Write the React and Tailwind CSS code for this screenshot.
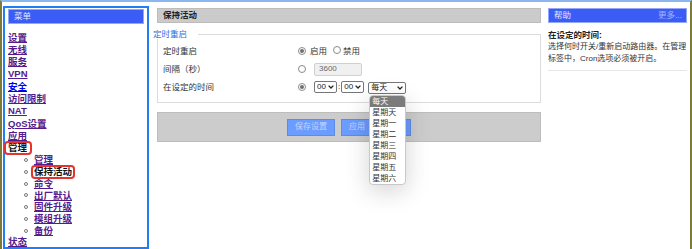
import React from 'react';

const menu = [
  { label: '设置' },
  { label: '无线' },
  { label: '服务' },
  { label: 'VPN' },
  { label: '安全', fresh: true },
  { label: '访问限制' },
  { label: 'NAT' },
  { label: 'QoS设置' },
  { label: '应用' },
];

const subMenu = ['管理', '保持活动', '命令', '出厂默认', '固件升级', '模组升级', '备份'];

const days = ['每天', '星期天', '星期一', '星期二', '星期三', '星期四', '星期五', '星期六'];

function Radio({ checked }) {
  return (
    <span className="inline-flex w-[8px] h-[8px] shrink-0 items-center justify-center rounded-full border border-[#8a8a8a] bg-white">
      {checked && <span className="w-[4px] h-[4px] rounded-full bg-[#6f6f6f]" />}
    </span>
  );
}

function Chevron() {
  return (
    <svg width="6" height="4" viewBox="0 0 6 4" className="shrink-0">
      <path d="M0.6 0.6 L3 3 L5.4 0.6" stroke="#222" strokeWidth="1.3" fill="none" />
    </svg>
  );
}

function Select({ value, width }) {
  return (
    <span className={`inline-flex h-[12px] items-center justify-between rounded-[2px] border border-[#767676] bg-white pl-[2px] pr-[2px] text-[8px] leading-[10px] text-[#222] ${width}`}>
      <span>{value}</span>
      <Chevron />
    </span>
  );
}

function PanelHeader({ title, more }) {
  return (
    <div className="flex h-[15px] items-center justify-between border border-[#93a8fb] bg-[#3b5df6] pl-[5px] pr-[4px] text-[8.5px] leading-[13px]">
      <span className="text-[#e4e8ff]">{title}</span>
      {more && <span className="text-[#a3b3ff]">{more}</span>}
    </div>
  );
}

export default function App() {
  return (
    <div className="flex h-[249px] items-start overflow-hidden border-t-2 border-l-2 border-r-2 border-t-[#8cb6ee] border-l-[#7b7a38] border-r-[#7b7a38] bg-white font-['Liberation_Sans','Noto_Sans_CJK_SC',sans-serif] text-[#333]">
      {/* left menu */}
      <div className="ml-[1px] mt-[4px] h-[243px] w-[146px] shrink-0 border-2 border-[#1f7ff3]">
        <div className="mx-[3px] mt-[1px]">
          <PanelHeader title="菜单" />
        </div>
        <div className="mt-[7.5px] pl-[3px] text-[9.5px] font-bold">
          {menu.map((m) => (
            <div key={m.label} className="leading-[12.3px]">
              <span className={`underline ${m.fresh ? 'text-[#0000ee]' : 'text-[#551a8b]'}`}>{m.label}</span>
            </div>
          ))}
          <div className="leading-[12.3px]">
            <span className="-ml-[3px] inline-block rounded-[3px] pl-[3px] pr-[4px] text-[#111] outline-2 outline-offset-[-1px] outline-[#e3342f]">管理</span>
          </div>
          {subMenu.map((s) => (
            <div key={s} className="flex items-center leading-[11.7px]">
              <span className="ml-[16px] mr-[6px] h-[4px] w-[4px] rounded-full border border-[#777]" />
              {s === '保持活动' ? (
                <span className="-ml-[2px] inline-block rounded-[3px] pl-[2px] pr-[2px] text-[#111] outline-2 outline-offset-[-1px] outline-[#e3342f]">{s}</span>
              ) : (
                <span className="text-[#551a8b] underline">{s}</span>
              )}
            </div>
          ))}
          <div className="leading-[12.3px]">
            <span className="text-[#551a8b] underline">状态</span>
          </div>
        </div>
      </div>

      {/* main */}
      <div className="ml-[8px] mt-[6px] w-[384px] shrink-0">
        <div className="flex h-[15px] items-center border border-[#bcbcbc] bg-[#cbcbcb] pl-[5px] text-[8.5px] font-bold text-[#222]">
          保持活动
        </div>

        <div className="mt-[7px] flex h-[9px] items-center">
          <span className="-ml-[4px] pr-[11px] text-[8.5px] leading-[9px] text-[#2f6de0]">定时重启</span>
          <div className="h-[5px] flex-1 self-end border-t border-r border-[#dcdcdc]" />
        </div>
        <div className="border-x border-b border-[#dcdcdc] pt-[3px] pb-[6px] pl-[5px] text-[8.5px]">
          <div className="flex h-[18px] items-center">
            <span className="w-[135px]">定时重启</span>
            <Radio checked />
            <span className="ml-[4px]">启用</span>
            <span className="ml-[6px]"><Radio /></span>
            <span className="ml-[2px]">禁用</span>
          </div>
          <div className="flex h-[18px] items-center">
            <span className="w-[135px]">间隔（秒）</span>
            <Radio />
            <span className="ml-[8px] flex h-[13px] w-[48px] items-center rounded-[2px] border border-[#d0d0d0] bg-[#f0f0f0] pl-[4px] text-[8px] text-[#6a6a6a]">3600</span>
          </div>
          <div className="flex h-[18px] items-center">
            <span className="w-[135px]">在设定的时间</span>
            <Radio checked />
            <span className="ml-[8px] flex items-center">
              <Select value="00" width="w-[23px]" />
              <span className="mx-[1px] text-[8px] text-[#222]">:</span>
              <Select value="00" width="w-[23px]" />
              <span className="relative ml-[4px]">
                <Select value="每天" width="w-[38px]" />
                <div className="absolute left-[1px] top-[14px] z-10 w-[37px] overflow-hidden rounded-[4px] border border-[#c8c8c8] bg-white shadow-[0_6px_24px_rgba(0,0,0,0.18)]">
                  {days.map((d, i) => (
                    <div
                      key={d}
                      className={`h-[11px] pl-[2px] text-[8px] leading-[11px] ${i === 0 ? 'bg-[#7b7b7b] text-white' : 'text-[#333]'}`}
                    >
                      {d}
                    </div>
                  ))}
                </div>
              </span>
            </span>
          </div>
        </div>

        <div className="mt-[9px] flex h-[30px] items-center justify-center gap-[6px] border border-[#bdbdbd] bg-[#cccccc]">
          <button className="h-[17px] border border-[#5d8be8] bg-[#6b9cff] px-[7px] text-[8px] text-[#c4d5ff]">保存设置</button>
          <button className="h-[17px] border border-[#5d8be8] bg-[#6b9cff] px-[7px] text-[8px] text-[#c4d5ff]">应用</button>
          <button className="h-[17px] border border-[#5d8be8] bg-[#6b9cff] px-[7px] text-[8px] text-[#c4d5ff]">取消</button>
        </div>
      </div>

      {/* help */}
      <div className="ml-[7px] mt-[6px] w-[139px] shrink-0">
        <PanelHeader title="帮助" more="更多..." />
        <div className="mt-[6px] text-[8.5px] font-bold leading-[12px] text-[#222]">在设定的时间:</div>
        <p className="whitespace-nowrap text-[8px] leading-[12px] text-[#333]">
          选择何时开关/重新启动路由器。在管理
          <br />
          标签中，Cron选项必须被开启。
        </p>
        <div className="mt-[5px] border-t border-[#e6e6e6]" />
      </div>
    </div>
  );
}
